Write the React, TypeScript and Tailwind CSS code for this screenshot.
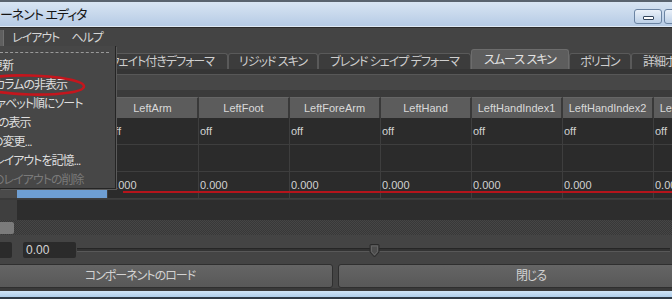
import React from "react";

const cols = [
  "Hips",
  "LeftArm",
  "LeftFoot",
  "LeftForeArm",
  "LeftHand",
  "LeftHandIndex1",
  "LeftHandIndex2",
  "LeftHandIndex3",
];

const tabs: { label: string; w: string; active?: boolean; align?: string }[] = [
  { label: "ウェイト付きデフォーマ", w: "w-[128px]", align: "justify-end pr-[13px]" },
  { label: "リジッド スキン", w: "w-[90px]" },
  { label: "ブレンド シェイプ デフォーマ", w: "w-[153px]" },
  { label: "スムース スキン", w: "w-[98px]", active: true },
  { label: "ポリゴン", w: "w-[62px]" },
  { label: "詳細ポリゴン", w: "w-[80px]", align: "justify-start pl-[11px]" },
];

const menuItems: { label: string; ml: string; disabled?: boolean }[] = [
  { label: "更新", ml: "ml-[-9px]" },
  { label: "カラムの非表示", ml: "ml-[-6px]" },
  { label: "アルファベット順にソート", ml: "ml-[-33px]" },
  { label: "の表示", ml: "ml-[-2px]" },
  { label: "の変更...", ml: "ml-[-8px]" },
  { label: "レイアウトを記憶...", ml: "ml-[-6px]" },
  { label: "のレイアウトの削除", ml: "ml-[-7px]", disabled: true },
];

export default function App() {
  return (
    <div className="relative w-[672px] h-[299px] overflow-hidden bg-[#444444] font-['Liberation_Sans','Noto_Sans_CJK_JP',sans-serif] [font-feature-settings:'palt']">
      <div className="flex flex-col h-full">
        {/* top frame */}
        <div className="h-[2px] bg-[#59636e]" />
        {/* title bar */}
        <div className="h-[25px] flex justify-between bg-gradient-to-b from-[#d8e5f3] to-[#b6cbe5] border-b border-[#dfe9f4]">
          <div className="pt-[5px] text-[13px] leading-[16px] tracking-[-1px] text-[#151515] whitespace-nowrap">
            ーネント エディタ
          </div>
          <div className="flex gap-[2px] pt-[7px] mr-[-20px]">
            <div className="w-[28px] h-[15px] rounded-[3px] border border-[#6b84a3] bg-gradient-to-b from-[#eaf1f9] to-[#bdd0e7] flex items-center justify-center">
              <div className="w-[11px] h-[4px] mt-[2px] rounded-[1px] border border-[#34465d] bg-white" />
            </div>
            <div className="w-[28px] h-[15px] rounded-[3px] border border-[#6b84a3] bg-gradient-to-b from-[#eaf1f9] to-[#bdd0e7]" />
          </div>
        </div>
        <div className="h-[1px] bg-[#2c2c2c]" />
        {/* menu bar */}
        <div className="h-[19px] flex items-center text-[12px] tracking-[-1px] text-[#d6d6d6] bg-[#444444]">
          <div className="w-[4px] h-[16px] bg-[#5f5f5f] border-r border-[#707070]" />
          <span className="ml-[8px]">レイアウト</span>
          <span className="ml-[12px]">ヘルプ</span>
        </div>
        {/* tabs */}
        <div className="h-[22px] flex items-end pl-[100px] bg-[#444444]">
          {tabs.map((t) => (
            <div
              key={t.label}
              className={
                "shrink-0 flex items-center whitespace-nowrap text-[12px] tracking-[-1px] rounded-t-[3px] border border-b-0 " +
                t.w +
                " " +
                (t.align ?? "justify-center") +
                " " +
                (t.active
                  ? "h-[20px] bg-[#5d5d5d] border-[#6c6c6c] text-[#e2e2e2]"
                  : "h-[16px] bg-[#3c3c3c] border-[#5a5a5a] text-[#cfcfcf]")
              }
            >
              {t.label}
            </div>
          ))}
        </div>
        <div className="h-[5px] bg-[#353535]" />
        <div className="h-[16px] bg-[#474747] border-t border-[#575757]" />
        <div className="h-[7px] bg-[#3b3b3b]" />
        {/* table */}
        <div className="flex">
          {/* row header column */}
          <div className="w-[17px] shrink-0 flex flex-col">
            <div className="h-[21px] bg-[#555555]" />
            <div className="h-[27px] bg-[#4a4a4a] border-b border-[#3a3a3a]" />
            <div className="h-[27px] bg-[#4a4a4a] border-b border-[#3a3a3a]" />
            <div className="h-[27px] bg-[#4a4a4a] border-b border-[#3a3a3a] flex items-start">
              <span className="ml-[5px] mt-[15px] w-[3px] h-[2px] bg-[#9a9a9a]" />
            </div>
          </div>
          {cols.map((c, i) => (
            <div key={c} className="w-[91px] shrink-0 flex flex-col">
              <div className="h-[21px] bg-[#5c5c5c] border-r-2 border-[#393939] border-t border-t-[#666666] flex items-center justify-center text-[11px] text-[#d9d9d9] whitespace-nowrap overflow-hidden">
                {c}
              </div>
              <div className="h-[27px] bg-[#2b2b2b] border-r border-b border-[#3e3e3e] flex items-center pl-[1px] text-[11px] text-[#d2d2d2]">
                off
              </div>
              <div className="h-[27px] bg-[#2b2b2b] border-r border-b border-[#3e3e3e]" />
              <div
                className={
                  "h-[27px] border-r border-b border-[#3e3e3e] flex items-center pl-[1px] text-[11px] text-[#d2d2d2] " +
                  (i === 0 ? "bg-[#6e9ed2]" : "bg-[#2b2b2b]")
                }
              >
                0.000
              </div>
            </div>
          ))}
        </div>
        <div className="h-[1px] bg-[#3a3a3a]" />
        {/* empty area */}
        <div className="h-[20px] flex">
          <div className="w-[17px] bg-[#3f3f3f]" />
          <div className="flex-1 bg-[#2d2d2d]" />
        </div>
        {/* textured band */}
        <div className="h-[15px] flex items-center bg-[repeating-conic-gradient(#383838_0_25%,#464646_0_50%)] bg-[length:2px_2px]">
          <div className="w-[14px] h-[12px] bg-[#7b7b7b] rounded-r-[2px]" />
        </div>
        <div className="h-[7px] bg-[#444444]" />
        {/* slider row */}
        <div className="h-[16px] flex items-center">
          <div className="w-[12px] h-[16px] bg-[#2b2b2b] rounded-r-[2px]" />
          <div className="w-[53px] h-[16px] ml-[11px] bg-[#2b2b2b] rounded-[2px] flex items-center pl-[3px] text-[12px] text-[#d6d6d6]">
            0.00
          </div>
          <div className="relative flex-1 ml-[1px] mr-[2px] h-[16px] flex items-center">
            <div className="w-full h-[4px] bg-[#333333] border-t border-[#262626] border-b border-b-[#585858]" />
            <svg
              className="absolute left-[292px] top-[2px]"
              width="11"
              height="14"
              viewBox="0 0 11 14"
            >
              <path d="M1 1.5 Q1 0.5 2 0.5 H9 Q10 0.5 10 1.5 V8 L5.5 13 L1 8 Z" fill="#4d4d4d" stroke="#2a2a2a" strokeWidth="1" />
              <path d="M2.5 2 H8.5 V7.5 L5.5 11 L2.5 7.5 Z" fill="none" stroke="#6a6a6a" strokeWidth="0.8" />
            </svg>
          </div>
        </div>
        <div className="h-[6px] bg-[#444444]" />
        {/* buttons */}
        <div className="h-[24px] flex gap-[5px] ml-[-53px]">
          <div className="w-[386px] shrink-0 h-full rounded-[3px] border border-[#2f2f2f] bg-gradient-to-b from-[#656565] to-[#585858] flex items-center justify-center text-[12px] tracking-[-1px] text-[#d2d2d2]">
            コンポーネントのロード
          </div>
          <div className="w-[386px] shrink-0 h-full rounded-[3px] border border-[#2f2f2f] bg-gradient-to-b from-[#656565] to-[#585858] flex items-center justify-center text-[12px] tracking-[-1px] text-[#d2d2d2]">
            閉じる
          </div>
        </div>
        <div className="h-[3px] bg-[#3a3a3a]" />
        <div className="h-[6px] bg-gradient-to-b from-[#cfe4f6] to-[#aecde9]" />
        <div className="h-[2px] bg-[#2e3a46]" />
      </div>

      {/* dropdown menu overlay */}
      <div className="absolute left-0 top-[46px] w-[116px] h-[143px] bg-[#474747] border-r border-b border-[#252525] shadow-[1px_1px_0_#5a5a5a] overflow-hidden">
        <div className="mt-[6px] mr-[6px] border-t border-dashed border-[#9a9a9a]" />
        <div className="mt-[3px] flex flex-col">
          {menuItems.map((m) => (
            <div
              key={m.label}
              className={
                "h-[19px] flex items-center whitespace-nowrap text-[12px] tracking-[-1px] " +
                (m.disabled ? "text-[#7a7a7a]" : "text-[#dedede]")
              }
            >
              <span className={m.ml}>{m.label}</span>
            </div>
          ))}
        </div>
      </div>

      {/* red annotations */}
      <svg className="absolute left-[-40px] top-[70px]" width="140" height="32" viewBox="0 0 140 32">
        <ellipse cx="70" cy="15" rx="54" ry="9.5" fill="none" stroke="#c4161d" strokeWidth="2.6" transform="rotate(1.5 70 15)" />
      </svg>
      <div className="absolute left-[123px] right-0 top-[191px] h-[2px] bg-[#b5141b]" />
    </div>
  );
}
